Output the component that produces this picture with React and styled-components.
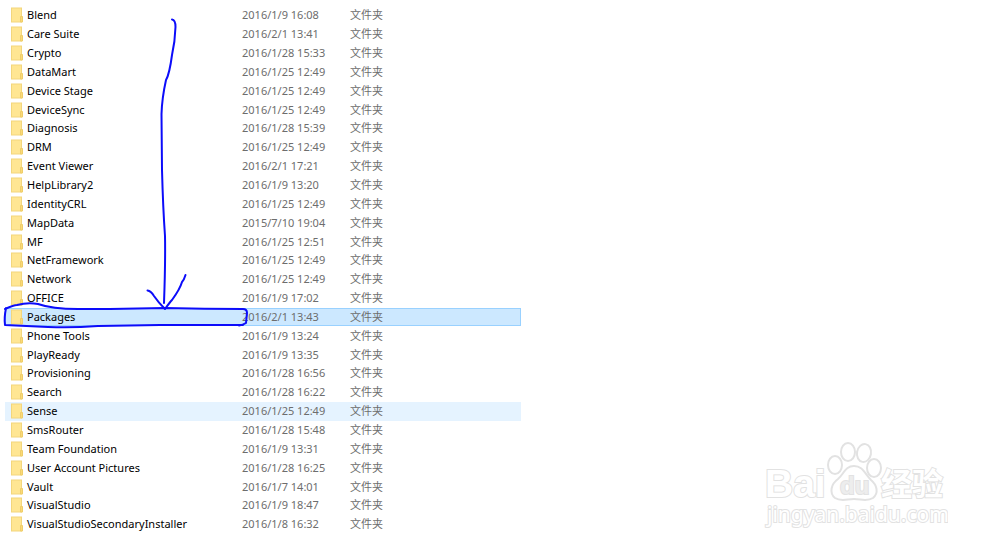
import styled, { createGlobalStyle } from "styled-components";

const folders = [
    { name: "Blend", date: "2016/1/9 16:08" },
    { name: "Care Suite", date: "2016/2/1 13:41" },
    { name: "Crypto", date: "2016/1/28 15:33" },
    { name: "DataMart", date: "2016/1/25 12:49" },
    { name: "Device Stage", date: "2016/1/25 12:49" },
    { name: "DeviceSync", date: "2016/1/25 12:49" },
    { name: "Diagnosis", date: "2016/1/28 15:39" },
    { name: "DRM", date: "2016/1/25 12:49" },
    { name: "Event Viewer", date: "2016/2/1 17:21" },
    { name: "HelpLibrary2", date: "2016/1/9 13:20" },
    { name: "IdentityCRL", date: "2016/1/25 12:49" },
    { name: "MapData", date: "2015/7/10 19:04" },
    { name: "MF", date: "2016/1/25 12:51" },
    { name: "NetFramework", date: "2016/1/25 12:49" },
    { name: "Network", date: "2016/1/25 12:49" },
    { name: "OFFICE", date: "2016/1/9 17:02" },
    { name: "Packages", date: "2016/2/1 13:43", state: "selected" },
    { name: "Phone Tools", date: "2016/1/9 13:24" },
    { name: "PlayReady", date: "2016/1/9 13:35" },
    { name: "Provisioning", date: "2016/1/28 16:56" },
    { name: "Search", date: "2016/1/28 16:22" },
    { name: "Sense", date: "2016/1/25 12:49", state: "hover" },
    { name: "SmsRouter", date: "2016/1/28 15:48" },
    { name: "Team Foundation", date: "2016/1/9 13:31" },
    { name: "User Account Pictures", date: "2016/1/28 16:25" },
    { name: "Vault", date: "2016/1/7 14:01" },
    { name: "VisualStudio", date: "2016/1/9 18:47" },
    { name: "VisualStudioSecondaryInstaller", date: "2016/1/8 16:32" },
];

const rowColors = {
    selected: "#cce8ff",
    hover: "#e5f3ff",
};

function FolderIcon() {
    return (
        <Icon viewBox="0 0 12 16" aria-hidden="true">
            <rect x="0.5" y="1" width="10" height="14" fill="#ffe693" stroke="#f3d67c" />
            <path d="M9.500 9.500h2v5.500h-2z" fill="#fada78" stroke="#efcd6a" />
        </Icon>
    );
}

function PenMarks() {
    return (
        <Pen viewBox="0 0 260 340" aria-hidden="true">
            <path d="M172 19.5Q175.500 20 175.500 27Q175 42 172 55Q169.500 74 166 80Q162 98 161.500 114L162 170Q163 208 165 236Q165.500 262 164 303" />
            <path d="M147.500 290.500Q151 291 154 296Q158 302 165 309Q170 302 172 300Q180 289 182 282Q184 280 185.500 275" />
            <path d="M5 309Q14 305 17 305Q28 302 38 304Q52 309 78 309L110 309L165 308Q205 309 243 309Q247 309 247 313L246 323Q243 325 239 325.500M243 325L160 325L98 326Q72 328 48 327Q28 326 5 325Q4 318 6 308" />
        </Pen>
    );
}

function Watermark() {
    return (
        <Mark viewBox="0 0 190 96" role="img" aria-label="Baidu 经验">
            <ellipse cx="77" cy="30" rx="7" ry="9" />
            <ellipse cx="90" cy="17" rx="7" ry="9" />
            <ellipse cx="106" cy="18" rx="7" ry="9" transform="rotate(10 106 18)" />
            <ellipse cx="116" cy="33" rx="7" ry="9" />
            <path d="M96 31C87 31 86 39 80 44C73 49 71 58 77 63C83 67 89 64 96 64C103 64 109 67 115 63C121 58 119 50 113 45C107 39 105 31 96 31Z" />
            <LogoText x="7" y="62" $size={39}>Bai</LogoText>
            <LogoText x="82" y="59" $size={24} $fill="#EDEDED">du</LogoText>
            <LogoText x="123" y="60" $size={31}>经验</LogoText>
            <SiteText x="9" y="87">jingyan.baidu.com</SiteText>
        </Mark>
    );
}

export default function App() {
    return (
        <>
            <GlobalStyle />
            <Page>
                <FileTable>
                    <colgroup>
                        <NameCol />
                        <DateCol />
                        <col />
                    </colgroup>
                    <tbody>
                        {folders.map(({ name, date, state }) => (
                            <Row key={name} $state={state}>
                                <NameCell>
                                    <NameLabel>
                                        <FolderIcon />
                                        {name}
                                    </NameLabel>
                                </NameCell>
                                <Cell>{date}</Cell>
                                <Cell>文件夹</Cell>
                            </Row>
                        ))}
                    </tbody>
                </FileTable>
                <PenMarks />
                <Watermark />
            </Page>
        </>
    );
}

const GlobalStyle = createGlobalStyle`
    * {
        box-sizing: border-box;
    }
    body {
        margin: 0;
        background-color: #FFFFFF;
        font-family: "Noto Sans", "Noto Sans CJK SC", sans-serif;
        font-size: 11px;
    }
`;

const Page = styled.main`
    position: relative;
    min-height: 100vh;
    padding: 6px 3px 15px 5px;
`;

const FileTable = styled.table`
    width: 52%;
    height: calc(100vh - 21px);
    table-layout: fixed;
    border-collapse: collapse;
    line-height: 16px;
`;

const NameCol = styled.col`
    width: 237px;
`;

const DateCol = styled.col`
    width: 108px;
`;

const Row = styled.tr`
    background-color: ${({ $state }) => rowColors[$state] || "transparent"};
    outline: ${({ $state }) => ($state === "selected" ? "1px solid #99d1ff" : "none")};
    outline-offset: -1px;
`;

const Cell = styled.td`
    padding: 0;
    color: #6D6D6D;
    white-space: nowrap;
`;

const NameCell = styled(Cell)`
    padding-left: 6px;
    color: #000000;
`;

const NameLabel = styled.div`
    display: flex;
    align-items: center;
    gap: 4px;
`;

const Icon = styled.svg`
    width: 12px;
    height: 16px;
    flex: none;
`;

const Pen = styled.svg`
    position: absolute;
    top: 0;
    left: 0;
    width: 260px;
    height: 340px;
    fill: none;
    stroke: #0C0CFA;
    stroke-width: 2;
    stroke-linecap: round;
    stroke-linejoin: round;
    pointer-events: none;
`;

const Mark = styled.svg`
    position: absolute;
    right: 52px;
    bottom: 18px;
    width: 190px;
    height: 96px;
    fill: #FFFFFF;
    stroke: #E2E2E2;
    stroke-width: 2;
`;

const LogoText = styled.text`
    font-family: "Liberation Sans", "Noto Sans CJK SC", sans-serif;
    font-size: ${({ $size }) => $size}px;
    font-weight: 700;
    fill: ${({ $fill }) => $fill || "#FFFFFF"};
    paint-order: stroke;
`;

const SiteText = styled.text`
    font-family: "Noto Sans", sans-serif;
    font-size: 21px;
    font-weight: 400;
    paint-order: stroke;
`;
